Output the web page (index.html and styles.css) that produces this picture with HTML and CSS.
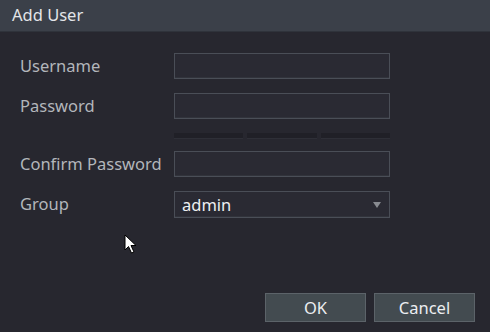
FILE: index.html
```html
<!DOCTYPE html>
<html lang="en">
  <head>
    <meta charset="UTF-8">
    <title>Add User</title>
    <link rel="stylesheet" href="styles.css">
  </head>
  <body>
    <div class="dialog">
      <div class="dialog-head">Add User</div>
      <div class="dialog-body">
        <div class="row">
          <label class="row-label">Username</label>
          <div class="field"></div>
        </div>
        <div class="row">
          <label class="row-label">Password</label>
          <div class="field"></div>
        </div>
        <div class="strength">
          <span></span><span></span><span></span>
        </div>
        <div class="row">
          <label class="row-label">Confirm Password</label>
          <div class="field"></div>
        </div>
        <div class="row">
          <label class="row-label">Group</label>
          <div class="field select">
            <span>admin</span>
            <span class="caret"></span>
          </div>
        </div>
        <svg class="cursor" width="14" height="22" viewBox="0 0 14 22">
          <path d="M1 1 L1 16 L4.5 12.5 L7.5 19 L10 18 L7 11.5 L12 11.5 Z" fill="#fff" stroke="#000" stroke-width="1"/>
        </svg>
      </div>
      <div class="dialog-foot">
        <button class="btn">OK</button>
        <button class="btn">Cancel</button>
      </div>
    </div>
  </body>
</html>
```

FILE: styles.css
```css
body {
  margin: 0;
  background-color: #27272f;
  font-family: 'Noto Sans', 'Open Sans', sans-serif;
}

.dialog {
  width: 490px;
  height: 332px;
  display: flex;
  flex-direction: column;
  position: relative;
}
.dialog-head {
  height: 32px;
  line-height: 30px;
  background-color: #3b4049;
  border-bottom: 1px solid #2f333b;
  box-sizing: border-box;
  padding-left: 12px;
  color: #e3e5e8;
  font-size: 16.5px;
}
.dialog-body {
  flex: 1;
  padding: 21px 0 0 20px;
  position: relative;
}
.row {
  display: flex;
  align-items: center;
  margin-bottom: 14px;
}
.row-label {
  width: 154px;
  color: #b3b6bb;
  font-size: 16.5px;
  margin-top: -2px;
}
.field {
  width: 214px;
  height: 24px;
  border: 1px solid #4a4e57;
  background-color: #2a2a33;
  box-shadow: inset 0 -1px 0 #31333b;
}
.strength {
  display: flex;
  gap: 4px;
  width: 216px;
  margin: 0 0 13px 154px;
}
.strength span {
  flex: 1;
  height: 5px;
  background-color: #202027;
  box-shadow: 0 1px 0 #2e2f37;
}
.select {
  display: flex;
  align-items: center;
  justify-content: space-between;
  padding: 0 8px 0 7px;
  width: 199px;
  height: 25px;
  color: #eef0f2;
  font-size: 16.5px;
}
.caret {
  width: 0;
  height: 0;
  border-left: 4px solid transparent;
  border-right: 4px solid transparent;
  border-top: 6px solid #888b91;
}
.cursor {
  position: absolute;
  left: 124px;
  top: 202px;
}
.dialog-foot {
  display: flex;
  justify-content: flex-end;
  gap: 8px;
  padding: 0 15px 10px 0;
}
.btn {
  width: 101px;
  height: 29px;
  background-color: #434b50;
  border: 1px solid #5c6369;
  color: #eceef0;
  font-family: 'Noto Sans', 'Open Sans', sans-serif;
  font-size: 16.5px;
  padding: 0;
}
```
